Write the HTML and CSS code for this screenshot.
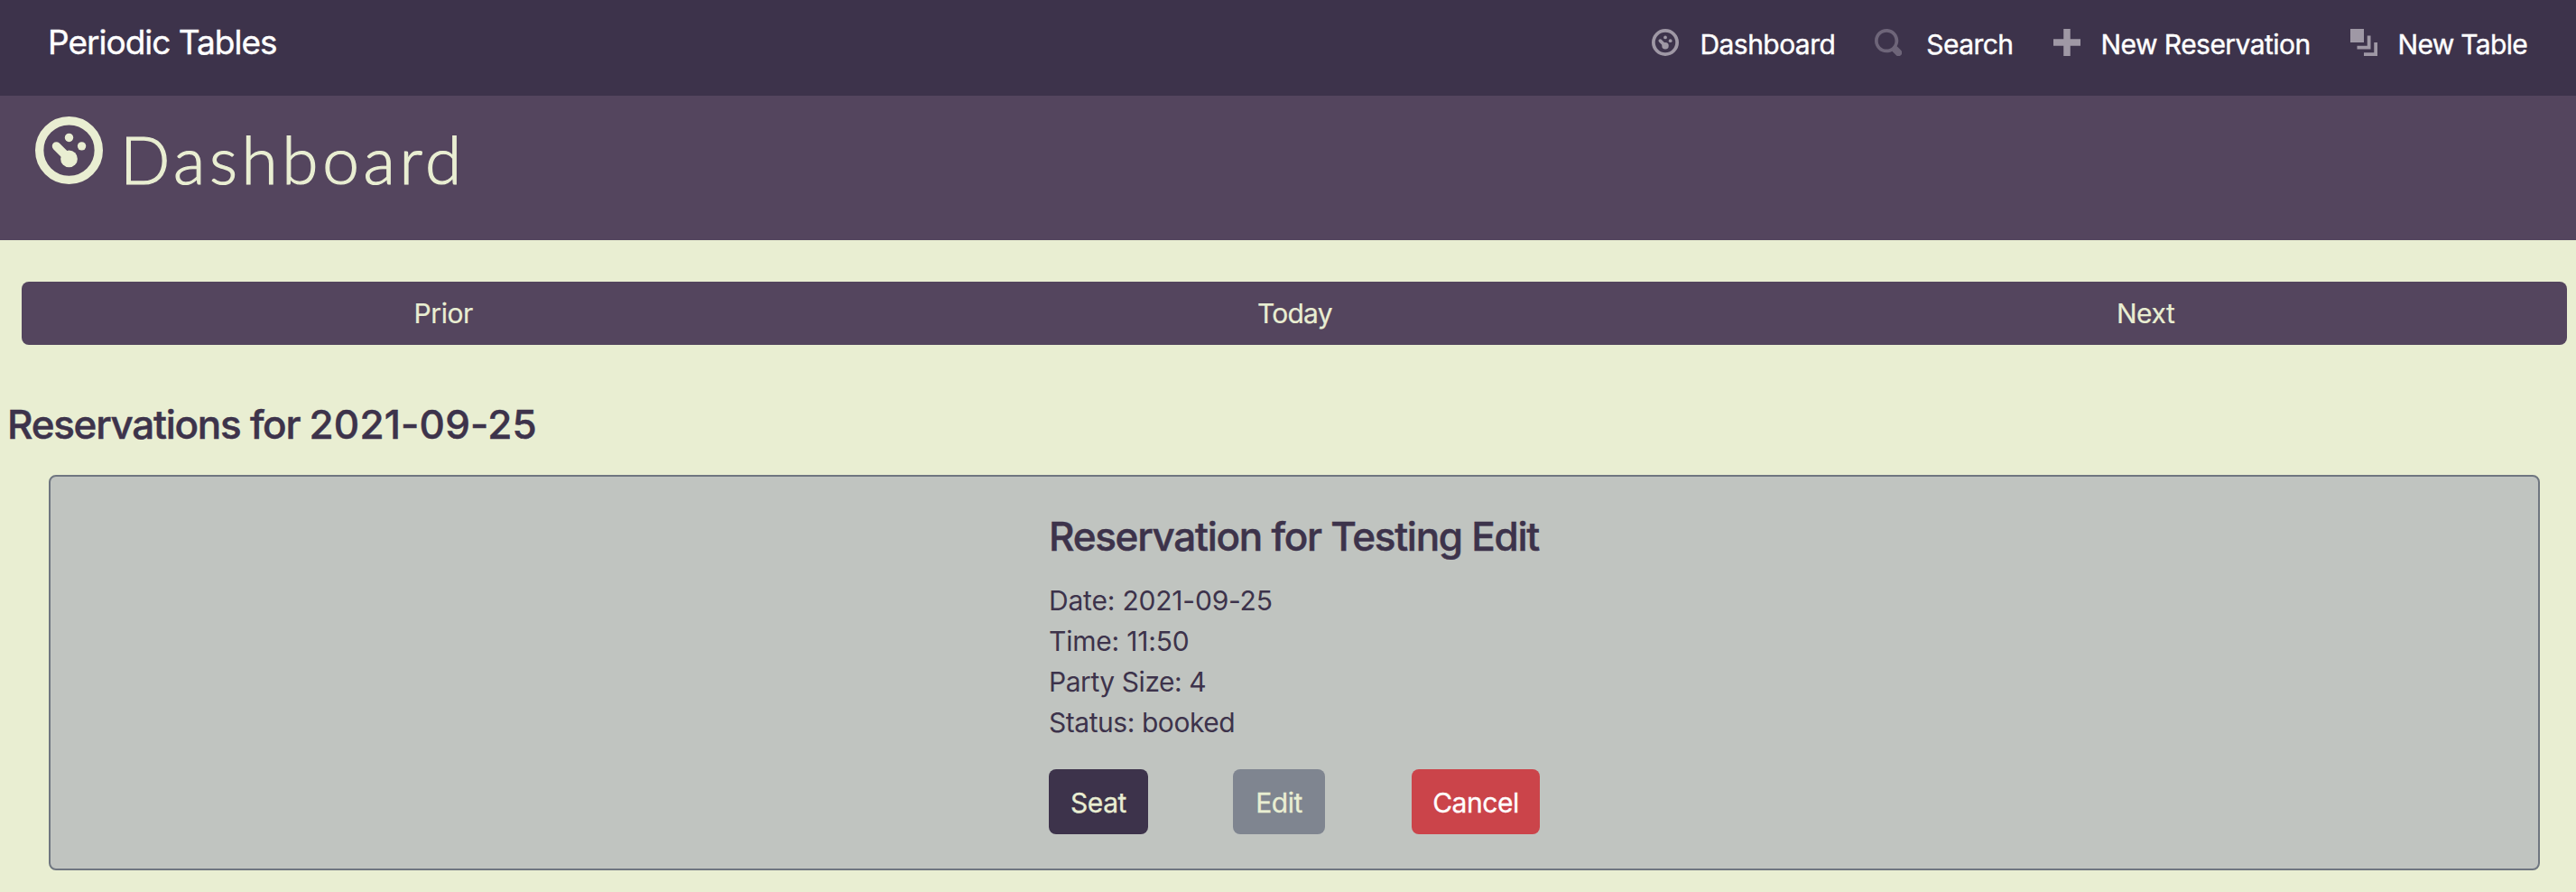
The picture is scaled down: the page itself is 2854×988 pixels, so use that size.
FILE: index.html
```html
<!DOCTYPE html>
<html lang="en">
<head>
<meta charset="utf-8">
<title>Periodic Tables</title>
<link rel="stylesheet" href="styles.css">
</head>
<body>
<nav class="navbar">
  <a class="brand">Periodic Tables</a>
  <ul class="nav-list">
    <li class="nav-item">
      <svg class="icon" viewBox="0 0 8 8"><circle cx="4" cy="4" r="3.5" fill="none" stroke="currentColor"/><circle cx="4" cy="2.5" r=".5"/><circle cx="5.5" cy="3.5" r=".5"/><circle cx="4" cy="5" r="1"/><path d="M2.5 3.5L4 5" stroke="currentColor" stroke-linecap="round"/></svg>
      <span>Dashboard</span>
    </li>
    <li class="nav-item nav-search">
      <svg class="icon icon-dim" viewBox="0 0 8 8"><path d="M3.5 0c-1.93 0-3.5 1.57-3.5 3.5s1.57 3.5 3.5 3.5c.59 0 1.17-.14 1.66-.41a1 1 0 0 0 .13.13l1 1a1.02 1.02 0 1 0 1.44-1.44l-1-1a1 1 0 0 0-.16-.13c.27-.49.44-1.06.44-1.66 0-1.93-1.55-3.5-3.5-3.5zm0 1c1.39 0 2.5 1.11 2.5 2.5 0 .66-.24 1.27-.66 1.72l-.03.03a1 1 0 0 0-.13.13c-.44.4-1.04.63-1.69.63-1.39 0-2.5-1.11-2.5-2.5s1.11-2.5 2.5-2.5z"/></svg>
      <span>Search</span>
    </li>
    <li class="nav-item">
      <svg class="icon" viewBox="0 0 8 8"><path d="M3 0v3h-3v2h3v3h2v-3h3v-2h-3v-3h-2z"/></svg>
      <span>New Reservation</span>
    </li>
    <li class="nav-item nav-table">
      <svg class="icon" viewBox="0 0 8 8"><path d="M0 0v4h4v-4h-4zm5 2v3h-3v1h4v-4h-1zm2 2v3h-3v1h4v-4h-1z"/></svg>
      <span>New Table</span>
    </li>
  </ul>
</nav>
<header class="page-header">
  <svg class="header-icon" viewBox="0 0 8 8"><circle cx="4" cy="4" r="3.5" fill="none" stroke="currentColor"/><circle cx="4" cy="2.5" r=".5"/><circle cx="5.5" cy="3.5" r=".5"/><circle cx="4" cy="5" r="1"/><path d="M2.5 3.5L4 5" stroke="currentColor" stroke-linecap="round"/></svg>
  <h1 class="page-title">Dashboard</h1>
</header>
<main>
  <div class="date-nav">
    <button class="date-btn">Prior</button>
    <button class="date-btn date-btn-today">Today</button>
    <button class="date-btn">Next</button>
  </div>
  <h2 class="section-title">Reservations for <span class="section-date">2021-09-25</span></h2>
  <section class="card">
    <div class="card-body">
      <h3 class="card-title">Reservation for Testing Edit</h3>
      <p class="line line-numeric">Date: 2021-09-25</p>
      <p class="line line-numeric">Time: 11:50</p>
      <p class="line">Party Size: 4</p>
      <p class="line">Status: booked</p>
      <div class="actions">
        <button class="btn btn-seat">Seat</button>
        <button class="btn btn-edit">Edit</button>
        <button class="btn btn-cancel">Cancel</button>
      </div>
    </div>
  </section>
</main>
</body>
</html>
```
FILE: styles.css
```css
* {
  box-sizing: border-box;
}

body {
  margin: 0;
  height: 988px;
  overflow: hidden;
  background: #e9eed2;
  color: #3d334b;
  font: 400 30px/45px Inter, "Liberation Sans", sans-serif;
  letter-spacing: -0.45px;
}

h1, h2, h3, p, ul {
  margin: 0;
  padding: 0;
}

button {
  border: 0;
  font: inherit;
  letter-spacing: inherit;
}

.navbar {
  display: flex;
  justify-content: space-between;
  align-items: flex-start;
  height: 106px;
  padding: 19px 54px 0 53px;
  background: #3d334b;
  color: #fff;
  -webkit-text-stroke: 0.4px currentColor;
}

.brand {
  font-size: 37px;
  line-height: 56px;
  letter-spacing: -1px;
}

.nav-list {
  display: flex;
  gap: 44px;
  padding-top: 8px;
  list-style: none;
  letter-spacing: -0.55px;
}

.nav-item {
  display: flex;
  gap: 23px;
}

.nav-search {
  gap: 27px;
}

.nav-table {
  letter-spacing: -0.7px;
}

.icon {
  width: 30px;
  height: 30px;
  margin-top: 5px;
  color: #9f98a5;
  fill: currentColor;
}

.icon-dim {
  color: #6e6579;
}

.page-header {
  display: flex;
  gap: 19px;
  height: 160px;
  padding: 23px 0 0 39px;
  background: #54455e;
  color: #e9eed2;
}

.header-icon {
  width: 75px;
  height: 75px;
  fill: currentColor;
}

.page-title {
  padding-top: 2px;
  font: 300 73px/90px Lato, sans-serif;
  letter-spacing: 4.6px;
  -webkit-text-stroke: 1.2px currentColor;
}

.date-nav {
  display: flex;
  height: 70px;
  margin: 46px 10px 0 24px;
  border-radius: 8px;
  background: #54455e;
}

.date-btn {
  flex: 1 1 auto;
  padding: 0;
  background: none;
  color: #e9eed2;
  -webkit-text-stroke: 0.2px currentColor;
}

.date-btn-today {
  letter-spacing: -0.8px;
}

.section-title,
.card-title {
  font-size: 44px;
  line-height: 54px;
  font-weight: 500;
  letter-spacing: -1.28px;
  white-space: nowrap;
  -webkit-text-stroke: 0.5px currentColor;
}

.section-title {
  margin: 61px 0 0 8px;
}

.section-date {
  letter-spacing: 0.15px;
}

.card {
  display: flex;
  justify-content: center;
  height: 438px;
  margin: 29px 40px 0 54px;
  border: 2px solid #6f7680;
  border-radius: 8px;
  background: #c0c4c0;
}

.card-body {
  width: 544px;
  padding-top: 39px;
}

.card-title {
  margin-bottom: 22px;
}

.line-numeric {
  letter-spacing: -0.2px;
}

.actions {
  display: flex;
  justify-content: space-between;
  margin-top: 29px;
}

.btn {
  width: 110px;
  height: 72px;
  padding: 2px 0 0;
  border-radius: 8px;
  background: #3d334b;
  color: #e9eed2;
  -webkit-text-stroke: 0.3px currentColor;
}

.btn-edit {
  width: 102px;
  margin-right: 2px;
  background: #7f8590;
}

.btn-cancel {
  width: 142px;
  background: #cb444a;
  color: #fff;
}
```
